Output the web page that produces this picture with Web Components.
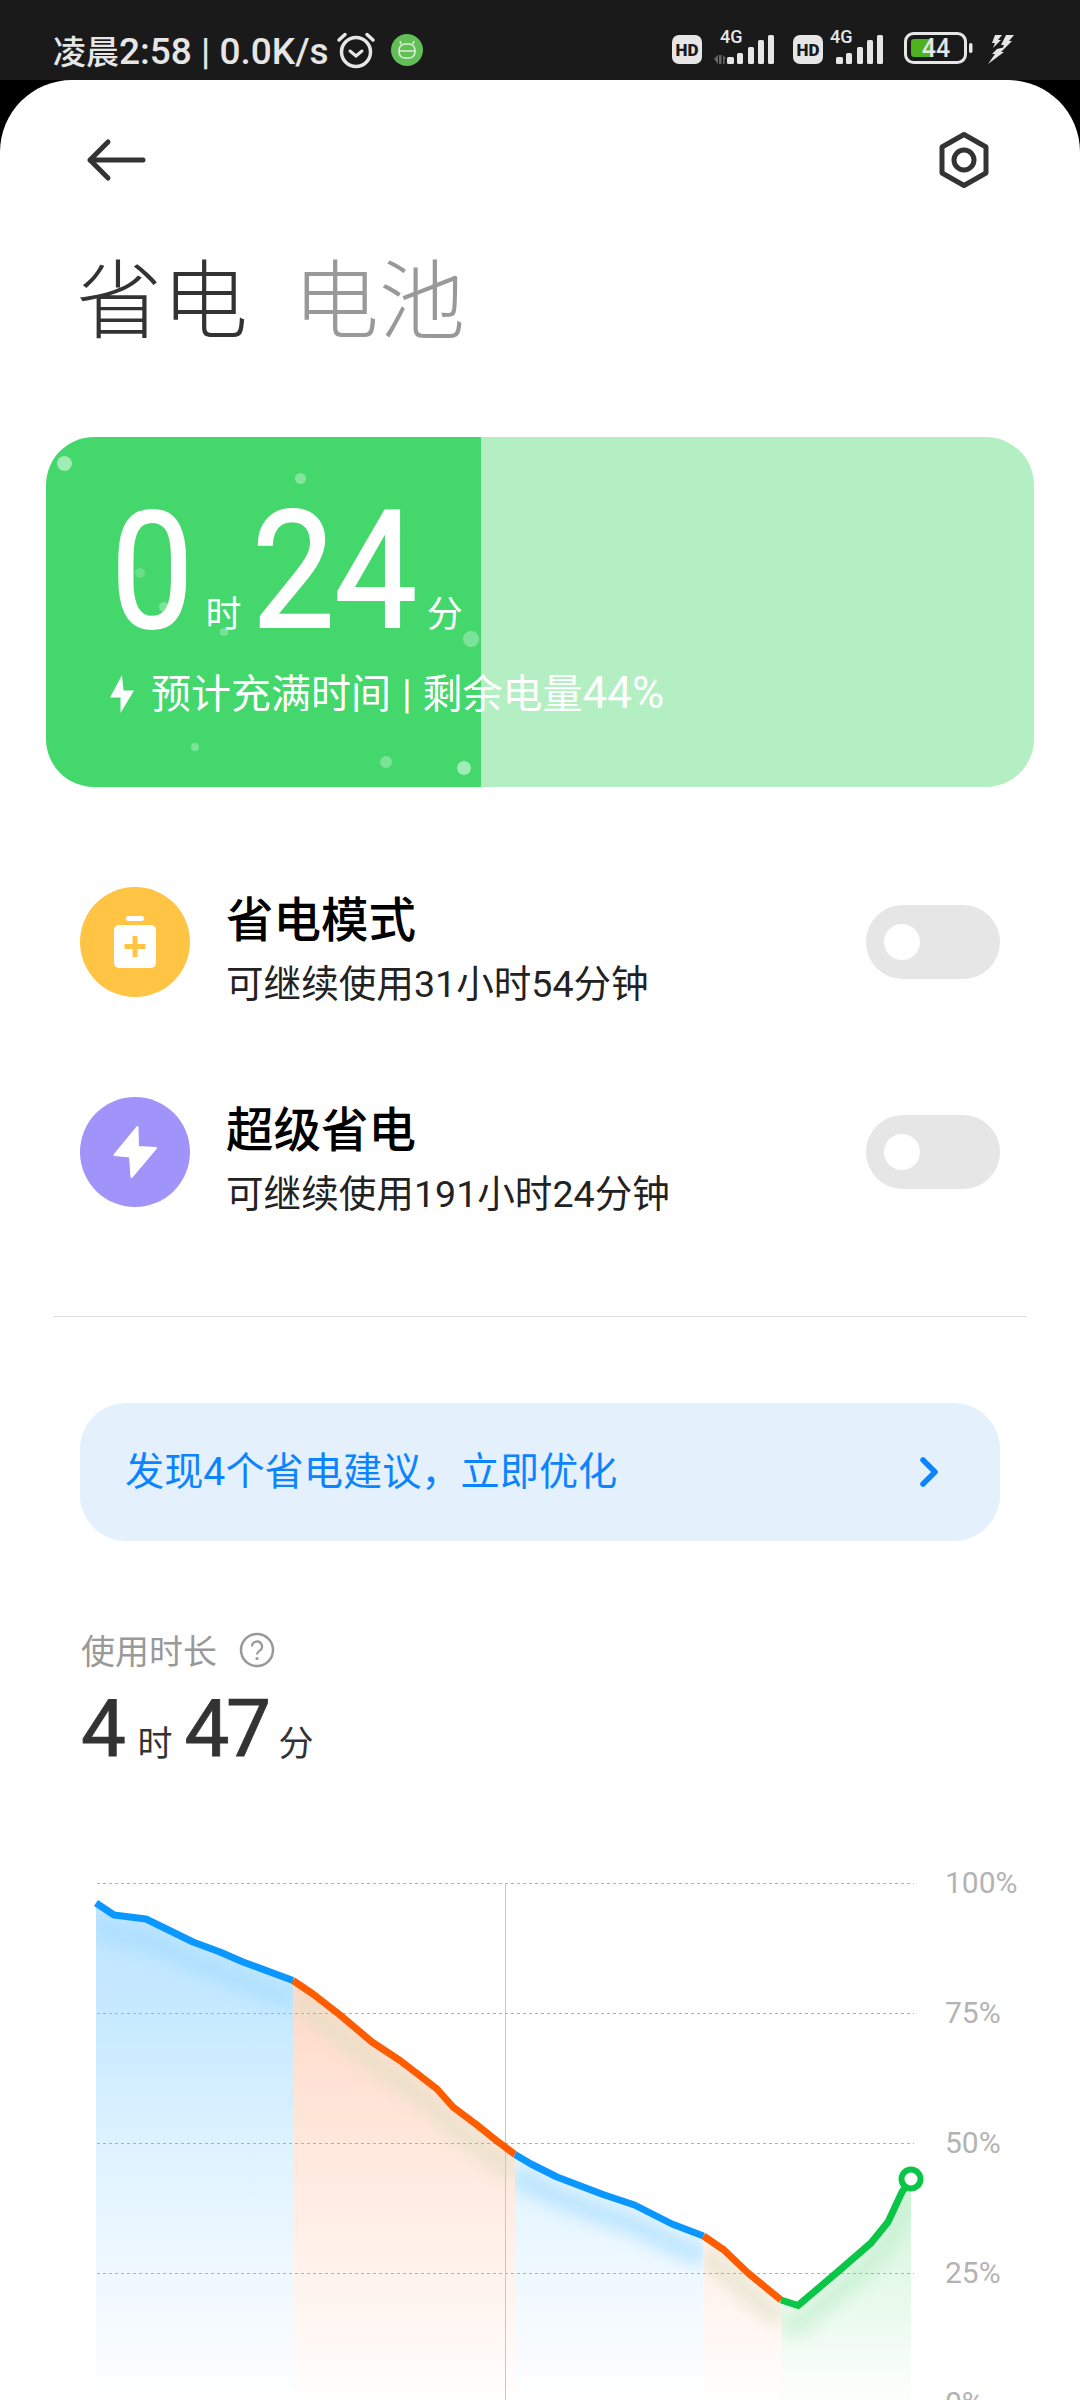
<!DOCTYPE html>
<html lang="zh">
<head>
<meta charset="utf-8">
<style>
  html, body { margin: 0; background: #000; }
  body {
    width: 1080px; height: 2400px; overflow: hidden;
    font-family: Roboto, "Noto Sans CJK SC", sans-serif;
  }
</style>
</head>
<body>
<status-bar></status-bar>
<app-sheet>
  <nav-bar></nav-bar>
  <tab-title></tab-title>
  <charge-card></charge-card>
  <mode-row class="first">
    <svg slot="icon" width="110" height="110" viewBox="0 0 110 110">
      <rect x="46" y="29" width="18" height="5" rx="2.500" fill="#fff"/>
      <rect x="34" y="38" width="42" height="43" rx="5" fill="#fff"/>
      <path d="M55 49v21M44.500 59.500h21" stroke="#ffc444" stroke-width="5" fill="none"/>
    </svg>
    <span slot="title">省电模式</span>
    <span slot="sub">可继续使用31小时54分钟</span>
  </mode-row>
  <mode-row class="purple">
    <svg slot="icon" width="110" height="110" viewBox="0 0 110 110">
      <path d="M57.500 30 34.500 58 50 59.500 51.500 80 76 51 58 50Z" fill="#fff" stroke="#fff" stroke-width="2" stroke-linejoin="round"/>
    </svg>
    <span slot="title">超级省电</span>
    <span slot="sub">可继续使用191小时24分钟</span>
  </mode-row>
  <section-line></section-line>
  <tip-banner>发现4个省电建议，立即优化</tip-banner>
  <usage-summary></usage-summary>
  <battery-chart></battery-chart>
</app-sheet>

<script>
class StatusBar extends HTMLElement {
  constructor() {
    super();
    this.attachShadow({mode: 'open'});
    const bars = `
      <rect x="13" y="22" width="7" height="7" rx="1.500"/>
      <rect x="23" y="18" width="6" height="11" rx="1.500"/>
      <rect x="34" y="12" width="6" height="17" rx="1.500"/>
      <rect x="44" y="5" width="6" height="24" rx="1.500"/>
      <rect x="54" y="0" width="6" height="29" rx="1.500"/>`;
    const hd = `
      <svg width="30" height="29" viewBox="0 0 30 29">
        <rect width="30" height="29" rx="7" fill="#e6e6e6"/>
        <text x="15" y="20.500" text-anchor="middle" font-size="17" font-weight="900" fill="#1a1a1a">HD</text>
      </svg>`;
    this.shadowRoot.innerHTML = `
      <style>
        :host {
          display: flex; align-items: center; height: 80px; box-sizing: border-box;
          padding: 28px 64px 8px 53px; background: #1a1a1a; color: #e6e6e6;
          font-size: 33px; font-weight: 500; white-space: nowrap;
        }
        .latin { font-size: 37px; }
        .clock { margin-left: 7px; }
        .app { margin-left: 15px; }
        .grow { flex: 1; }
        .right { display: flex; align-items: flex-end; margin-bottom: 11px; }
        .right text { font-family: Roboto, sans-serif; }
        svg { display: block; }
      </style>
      <span>凌晨<span class="latin">2:58 | 0.0K/s</span></span>
      <svg class="clock" width="40" height="38" viewBox="0 0 40 38" fill="none" stroke="#e6e6e6" stroke-linecap="round">
        <circle cx="20" cy="21" r="14.500" stroke-width="3.500"/>
        <path d="M14 20l6 5 6-5" stroke-width="3"/>
        <path d="M3 9 9 3.500M37 9 31 3.500" stroke-width="3.500"/>
      </svg>
      <svg class="app" width="32" height="32" viewBox="0 0 32 32">
        <circle cx="16" cy="16" r="16" fill="#62bf57"/>
        <g fill="none" stroke="#d8f0d4" stroke-width="1.600">
          <rect x="8" y="10" width="16" height="14" rx="6"/>
          <path d="M8 17h16M10 10 9 7M22 10l1-3"/>
        </g>
      </svg>
      <span class="grow"></span>
      <div class="right">
        ${hd}
        <svg style="margin-left:12px" width="67" height="39" viewBox="0 -10 67 39" fill="#e6e6e6">
          <text x="6" y="8" font-size="18" font-weight="500">4G</text>
          ${bars}
          <path d="M0 24l4-4v9zM5 20h2.500v9H5zM9 29v-9l3 4h-1.500v5z" fill="#666"/>
        </svg>
        <span style="width:12px"></span>
        ${hd}
        <svg style="margin-left:7px" width="60" height="39" viewBox="7 -10 60 39" fill="#e6e6e6">
          <text x="7" y="8" font-size="18" font-weight="500">4G</text>
          ${bars}
        </svg>
        <svg style="margin-left:14px" width="70" height="32" viewBox="0 0 70 32">
          <rect x="1.500" y="1.500" width="60" height="29" rx="8" fill="none" stroke="#e6e6e6" stroke-width="3"/>
          <rect x="7" y="7" width="22" height="18" rx="3" fill="#4fb31f"/>
          <rect x="65" y="11" width="3.500" height="10" rx="1.700" fill="#e6e6e6"/>
          <text x="32" y="25" text-anchor="middle" font-size="25" font-weight="500" fill="#e6e6e6">44</text>
        </svg>
        <svg style="margin-left:12px" width="30" height="30" viewBox="0 0 30 30" fill="#e6e6e6">
          <path d="M9 1h7L12 6h3l-8 8 2-5H6zM20 1h8l-5 6h3L15 18l3-7h-3zM19 13l-4 5h3L2 30l7-10H6l5-5z"/>
        </svg>
      </div>`;
  }
}

class AppSheet extends HTMLElement {
  constructor() {
    super();
    this.attachShadow({mode: 'open'});
    this.shadowRoot.innerHTML = `
      <style>
        :host {
          display: block; height: 2320px; background: #fff; overflow: hidden;
          border-radius: 72px 72px 0 0;
        }
      </style>
      <slot></slot>`;
  }
}

class NavBar extends HTMLElement {
  constructor() {
    super();
    this.attachShadow({mode: 'open'});
    this.shadowRoot.innerHTML = `
      <style>
        :host {
          display: flex; justify-content: space-between; align-items: center;
          height: 160px; padding: 0 89px 0 86px;
        }
        svg { display: block; }
      </style>
      <svg width="60" height="44" viewBox="0 0 60 44" fill="none" stroke="#333" stroke-width="5" stroke-linecap="round" stroke-linejoin="round">
        <path d="M57 22H4M22 4 4 22l18 18"/>
      </svg>
      <svg width="54" height="58" viewBox="0 0 54 58" fill="none" stroke="#333" stroke-width="5" stroke-linejoin="round">
        <path d="M27 3.500 49 16v26L27 54.500 5 42V16Z"/>
        <circle cx="27" cy="29" r="10"/>
      </svg>`;
  }
}

class TabTitle extends HTMLElement {
  constructor() {
    super();
    this.attachShadow({mode: 'open'});
    this.shadowRoot.innerHTML = `
      <style>
        :host {
          display: flex; gap: 45px; height: 100px; margin-top: 5px; padding-left: 76px;
          font: 300 86px/100px "Noto Sans CJK SC", sans-serif; color: #333;
        }
        .off { color: #999; }
      </style>
      <span>省电</span><span class="off">电池</span>`;
  }
}

class ChargeCard extends HTMLElement {
  constructor() {
    super();
    this.attachShadow({mode: 'open'});
    // bubbles: x, y, size, alpha (card coordinates)
    const bubbles = [
      [18, 26, 15, .5], [254, 41, 11, .35], [94, 136, 10, .2], [118, 170, 10, .3],
      [178, 195, 8, .3], [425, 202, 16, .3], [149, 310, 8, .3], [340, 325, 12, .3], [418, 331, 14, .5]
    ].map(b => `<i style="left:${b[0] - b[2] / 2}px;top:${b[1] - b[2] / 2}px;width:${b[2]}px;height:${b[2]}px;opacity:${b[3]}"></i>`).join('');
    this.shadowRoot.innerHTML = `
      <style>
        :host {
          display: block; position: relative; overflow: hidden; box-sizing: border-box;
          height: 350px; margin: 92px 46px 0; padding: 60px 0 0 65px;
          background: linear-gradient(90deg, #43d76c 435px, #b4efc4 435px);
          border-radius: 48px; color: #fff;
        }
        i { position: absolute; border-radius: 50%; background: #fff; }
        .time { display: flex; align-items: baseline; height: 150px; position: relative; }
        .num {
          display: inline-block; font: 400 163px/150px Roboto, sans-serif;
          -webkit-text-stroke: 2px #fff;
          transform: scaleX(.9); transform-origin: 0 50%;
        }
        .unit { font: 36px/40px "Noto Sans CJK SC", sans-serif; margin: 0 10px 0 12px; }
        .unit.last { margin: 0 0 0 10px; }
        .sub {
          display: flex; align-items: center; gap: 17px; margin-top: 21px; position: relative;
          margin-left: -1px; font: 40px/50px Roboto, "Noto Sans CJK SC", sans-serif;
          word-spacing: 1px; white-space: nowrap;
        }
        .pct { font-size: 44px; }
        svg { display: block; }
      </style>
      ${bubbles}
      <div class="time">
        <span class="num" style="margin-right:-9px">0</span><span class="unit">时</span>
        <span class="num" style="margin-right:-18px">24</span><span class="unit last">分</span>
      </div>
      <div class="sub">
        <svg width="24" height="38" viewBox="0 0 24 38" fill="#fff"><path d="M12 0 0 22.500h10.500V38L24 15.500H13.500Z"/></svg>
        <span>预计充满时间 | 剩余电量<span class="pct">44%</span></span>
      </div>`;
  }
}

class ModeRow extends HTMLElement {
  constructor() {
    super();
    this.attachShadow({mode: 'open'});
    this.shadowRoot.innerHTML = `
      <style>
        :host {
          display: flex; align-items: center; height: 210px; padding: 0 80px;
          --dot: #ffc444;
        }
        :host(.first) { margin-top: 50px; }
        :host(.purple) { --dot: #a094fb; }
        .dot { width: 110px; height: 110px; border-radius: 50%; background: var(--dot); flex: none; }
        .text { flex: 1; margin-left: 36px; padding-top: 12px; }
        .title { font: 500 47.500px/60px "Noto Sans CJK SC", sans-serif; color: #000; }
        .sub { font: 37.600px/50px Roboto, "Noto Sans CJK SC", sans-serif; color: #222; margin-top: 12px; }
        .toggle { width: 134px; height: 74px; border-radius: 37px; background: #e6e6e6; position: relative; flex: none; }
        .toggle::after {
          content: ""; position: absolute; left: 18px; top: 19px; width: 36px; height: 36px;
          border-radius: 50%; background: #fff;
        }
      </style>
      <div class="dot"><slot name="icon"></slot></div>
      <div class="text">
        <div class="title"><slot name="title"></slot></div>
        <div class="sub"><slot name="sub"></slot></div>
      </div>
      <div class="toggle"></div>`;
  }
}

class SectionLine extends HTMLElement {
  constructor() {
    super();
    this.attachShadow({mode: 'open'});
    this.shadowRoot.innerHTML = `
      <style>
        :host { display: block; height: 1px; margin: 59px 54px 0; background: #dcdcdc; }
      </style>`;
  }
}

class TipBanner extends HTMLElement {
  constructor() {
    super();
    this.attachShadow({mode: 'open'});
    this.shadowRoot.innerHTML = `
      <style>
        :host {
          display: flex; align-items: center; justify-content: space-between;
          height: 138px; margin: 86px 80px 0; padding: 0 61px 0 45px;
          background: #e4f1fd; border-radius: 46px; color: #0d84ff;
          font: 39.200px/50px Roboto, "Noto Sans CJK SC", sans-serif;
        }
        svg { display: block; }
      </style>
      <span><slot></slot></span>
      <svg width="20" height="32" viewBox="0 0 20 32" fill="none" stroke="#0d84ff" stroke-width="5.500" stroke-linecap="round" stroke-linejoin="round">
        <path d="M4 4l12 12L4 28"/>
      </svg>`;
  }
}

class UsageSummary extends HTMLElement {
  constructor() {
    super();
    this.attachShadow({mode: 'open'});
    this.shadowRoot.innerHTML = `
      <style>
        :host { display: block; margin-top: 89px; padding-left: 81px; color: #333; height: 188px; }
        .label {
          display: flex; align-items: center; gap: 22px; height: 40px; color: #999;
          font: 34px/40px "Noto Sans CJK SC", sans-serif;
        }
        .value { display: flex; align-items: baseline; margin-top: 19px; height: 80px; }
        .num { font: 400 80px/80px Roboto, sans-serif; letter-spacing: -3.500px; -webkit-text-stroke: .8px #333; }
        .unit { font: 35px/40px "Noto Sans CJK SC", sans-serif; margin: 0 12px 0 15px; }
        .unit.last { margin: 0 0 0 11px; }
        svg { display: block; }
      </style>
      <div class="label">
        <span>使用时长</span>
        <svg width="36" height="36" viewBox="0 0 36 36" fill="none" stroke="#999" stroke-width="2.500">
          <circle cx="18" cy="18" r="16"/>
          <path d="M13 14.500a5 5 0 1 1 7.500 4.300c-1.500 1-2.500 1.700-2.500 3.700" stroke-width="2.200"/>
          <circle cx="18" cy="26.500" r="1.600" fill="#999" stroke="none"/>
        </svg>
      </div>
      <div class="value">
        <span class="num">4</span><span class="unit">时</span>
        <span class="num">47</span><span class="unit last">分</span>
      </div>`;
  }
}

class BatteryChart extends HTMLElement {
  constructor() {
    super();
    this.attachShadow({mode: 'open'});
    const segments = [
      {c: 'blue', pts: [[96,1903],[114,1915],[146,1919],[193,1942],[220,1952],[243,1962],[293,1980.5]]},
      {c: 'orange', pts: [[293,1980.5],[313,1994],[340,2015],[372,2042],[400,2060.5],[417,2073.5],[437,2089],[453,2107],[477,2125],[497,2141],[515,2154.5]]},
      {c: 'blue', pts: [[515,2154.5],[531,2164],[557,2177],[603,2194.5],[634.5,2205],[672,2224],[703.5,2236]]},
      {c: 'orange', pts: [[703.5,2236],[724,2250],[748,2273],[781,2300]]},
      {c: 'green', pts: [[781,2300],[798,2305.5],[841,2269],[871,2243],[888,2222],[902,2192],[911,2179]]}
    ];
    const line = {blue: '#0a97ff', orange: '#ff5c00', green: '#0ac646'};
    const glow = {blue: '#a2dcff', orange: '#dfe0c4', green: '#bfeecb'};
    const str = pts => pts.map(p => p.join(',')).join(' ');
    let fills = '', clips = '', glows = '', lines = '';
    segments.forEach((s, i) => {
      const first = s.pts[0], last = s.pts[s.pts.length - 1];
      const area = str(s.pts) + ` ${last[0]},2400 ${first[0]},2400`;
      clips += `<clipPath id="clip${i}"><polygon points="${area}"/></clipPath>`;
      fills += `<polygon points="${area}" fill="url(#grad-${s.c})"/>`;
      glows += `<g clip-path="url(#clip${i})"><polyline points="${str(s.pts)}" transform="translate(0,20)" fill="none" stroke="${glow[s.c]}" stroke-width="22" filter="url(#soft)" opacity=".55"/></g>`;
      lines += `<polyline points="${str(s.pts)}" fill="none" stroke="${line[s.c]}" stroke-width="7" stroke-linejoin="round"/>`;
    });
    const grid = [1883, 2013, 2143, 2273].map(y =>
      `<path d="M97 ${y + .5}H914" stroke="#b0b0b0" stroke-dasharray="3 3"/>`).join('');
    this.shadowRoot.innerHTML = `
      <style>
        :host { display: flex; height: 582px; overflow: hidden; }
        svg { display: block; flex: none; }
        .labels { margin-left: 15px; color: #b3b3b3; font: 30px/130px Roboto, sans-serif; }
        .labels div { height: 130px; }
      </style>
      <svg width="930" height="582" viewBox="0 1818 930 582">
        <defs>
          <linearGradient id="grad-blue" gradientUnits="userSpaceOnUse" x1="0" y1="1900" x2="0" y2="2400">
            <stop offset="0" stop-color="#bde5ff"/><stop offset=".25" stop-color="#c8eaff"/>
            <stop offset=".5" stop-color="#dff3ff"/><stop offset=".75" stop-color="#eff8ff"/>
            <stop offset=".95" stop-color="#fbfdff"/><stop offset="1" stop-color="#fff"/>
          </linearGradient>
          <linearGradient id="grad-orange" gradientUnits="userSpaceOnUse" x1="0" y1="1980" x2="0" y2="2400">
            <stop offset="0" stop-color="#ffd9c7"/><stop offset=".4" stop-color="#ffe8dd"/>
            <stop offset=".7" stop-color="#fff3ed"/><stop offset=".95" stop-color="#fffcfa"/><stop offset="1" stop-color="#fff"/>
          </linearGradient>
          <linearGradient id="grad-green" gradientUnits="userSpaceOnUse" x1="0" y1="2180" x2="0" y2="2390">
            <stop offset="0" stop-color="#d5f5dd"/><stop offset=".6" stop-color="#e9faed"/><stop offset="1" stop-color="#fbfefb"/>
          </linearGradient>
          <filter id="soft" x="-10%" y="-30%" width="120%" height="160%"><feGaussianBlur stdDeviation="7"/></filter>
          ${clips}
        </defs>
        ${fills}
        ${glows}
        ${grid}
        <path d="M505.500 1883V2400" stroke="#c8c8c8"/>
        ${lines}
        <circle cx="911" cy="2179" r="9.500" fill="#fff" stroke="#0ac646" stroke-width="6"/>
      </svg>
      <div class="labels">
        <div>100%</div><div>75%</div><div>50%</div><div>25%</div><div>0%</div>
      </div>`;
  }
}

customElements.define('status-bar', StatusBar);
customElements.define('app-sheet', AppSheet);
customElements.define('nav-bar', NavBar);
customElements.define('tab-title', TabTitle);
customElements.define('charge-card', ChargeCard);
customElements.define('mode-row', ModeRow);
customElements.define('section-line', SectionLine);
customElements.define('tip-banner', TipBanner);
customElements.define('usage-summary', UsageSummary);
customElements.define('battery-chart', BatteryChart);
</script>
</body>
</html>
